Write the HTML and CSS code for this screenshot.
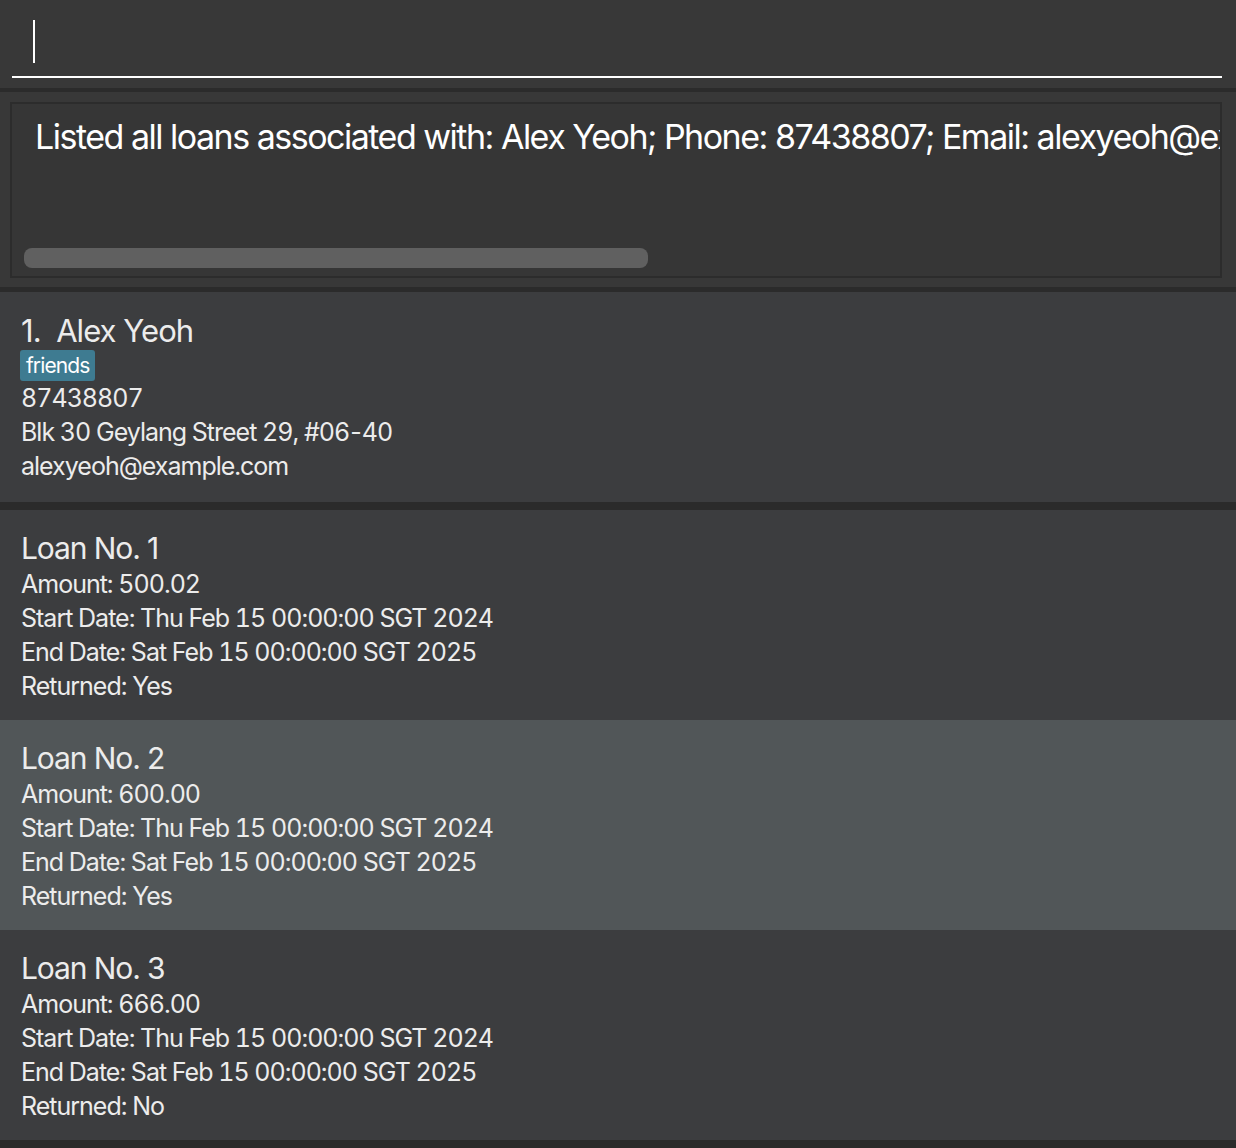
FILE: index.html
```html
<!DOCTYPE html>
<html>
<head>
<meta charset="utf-8">
<link rel="stylesheet" href="styles.css">
</head>
<body>
<div class="app">
  <div class="command">
    <div class="field"><span class="caret"></span></div>
  </div>
  <div class="result">
    <div class="result-box">
      <div class="result-text">Listed all loans associated with: Alex Yeoh; Phone: 87438807; Email: alexyeoh@example.com; Address: Blk 30 Geylang Street 29, #06-40; Tags: [friends]</div>
      <div class="hscroll"><div class="thumb"></div></div>
    </div>
  </div>
  <div class="card person">
    <div class="name">1.&nbsp;&nbsp;Alex Yeoh</div>
    <div class="tags"><span class="tag">friends</span></div>
    <div class="line">87438807</div>
    <div class="line">Blk 30 Geylang Street 29, #06<span class="plain">-</span>40</div>
    <div class="line">alexyeoh@example.com</div>
  </div>
  <div class="loans">
    <div class="card loan">
      <div class="title">Loan No. 1</div>
      <div class="line">Amount: 500.02</div>
      <div class="line">Start Date: Thu Feb 15 00:00:00 SGT 2024</div>
      <div class="line">End Date: Sat Feb 15 00:00:00 SGT 2025</div>
      <div class="line">Returned: Yes</div>
    </div>
    <div class="card loan selected">
      <div class="title">Loan No. 2</div>
      <div class="line">Amount: 600.00</div>
      <div class="line">Start Date: Thu Feb 15 00:00:00 SGT 2024</div>
      <div class="line">End Date: Sat Feb 15 00:00:00 SGT 2025</div>
      <div class="line">Returned: Yes</div>
    </div>
    <div class="card loan">
      <div class="title">Loan No. 3</div>
      <div class="line">Amount: 666.00</div>
      <div class="line">Start Date: Thu Feb 15 00:00:00 SGT 2024</div>
      <div class="line">End Date: Sat Feb 15 00:00:00 SGT 2025</div>
      <div class="line">Returned: No</div>
    </div>
  </div>
</div>
</body>
</html>
```
FILE: styles.css
```css
* { box-sizing: border-box; }
html, body {
  margin: 0;
  padding: 0;
  background: #2b2b2b;
}
body {
  width: 1236px;
  height: 1148px;
  overflow: hidden;
  font-family: Inter, "Noto Sans", sans-serif;
  color: #ececec;
}
.app {
  display: flex;
  flex-direction: column;
}
.command {
  height: 88px;
  background: #383838;
  padding: 0 14px 0 12px;
}
.field {
  height: 78px;
  border-bottom: 2px solid #ffffff;
  padding: 20px 0 0 21px;
}
.caret {
  display: block;
  width: 2px;
  height: 43px;
  background: #ffffff;
}
.result {
  margin-top: 4px;
  height: 195px;
  background: #383838;
  padding: 10px 14px 9px 10px;
}
.result-box {
  height: 176px;
  border: 2px solid #2c2c2c;
  background: #363636;
  display: flex;
  flex-direction: column;
  justify-content: space-between;
  padding: 12px 0 8px 12px;
  overflow: hidden;
}
.result-text {
  white-space: nowrap;
  overflow: hidden;
  font-size: 34px;
  line-height: 42px;
  color: #ffffff;
  padding-left: 11px;
  letter-spacing: -1.5px;
}
.hscroll {
  height: 20px;
}
.thumb {
  width: 624px;
  height: 20px;
  border-radius: 8px;
  background: #606060;
}
.card {
  height: 210px;
  background: #3c3d3f;
  padding: 20px 21px 0 21px;
}
.person {
  margin-top: 5px;
}
.name {
  font-size: 31px;
  line-height: 38px;
  letter-spacing: -0.95px;
}
.tags {
  display: flex;
  height: 31px;
}
.tag {
  display: block;
  background: #3e7b91;
  color: #ffffff;
  font-size: 21px;
  line-height: 31px;
  padding: 0 6px;
  border-radius: 3px;
  letter-spacing: -0.9px;
  margin-left: -1px;
}
.line {
  font-size: 25px;
  line-height: 34px;
  letter-spacing: -1px;
  white-space: nowrap;
  font-variant-numeric: tabular-nums;
}
.plain {
  font-variant-numeric: normal;
  padding: 0 1px;
}
.loans {
  margin-top: 8px;
  display: flex;
  flex-direction: column;
}
.loan {
  padding-top: 19px;
}
.title {
  font-size: 30px;
  line-height: 38px;
  letter-spacing: -1.1px;
}
.selected {
  background: #515658;
}
```
